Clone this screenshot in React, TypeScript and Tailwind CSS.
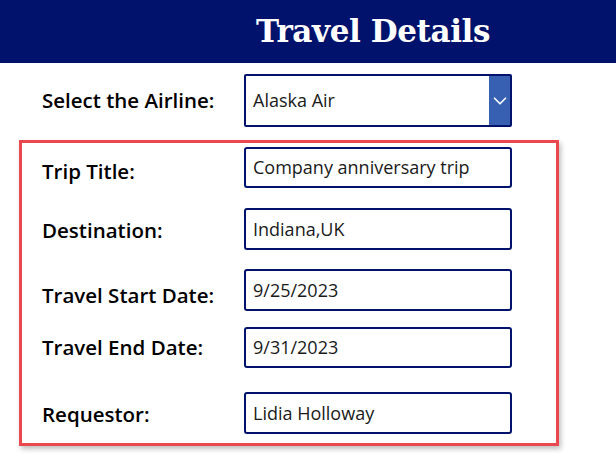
import { ChevronDown } from "lucide-react";

const fields = [
  { label: "Trip Title:", value: "Company anniversary trip", h: "h-[41px]", mt: "mt-0", lab: "pt-[8px]" },
  { label: "Destination:", value: "Indiana,UK", h: "h-[42px]", mt: "mt-[20px]", lab: "pt-[3px]" },
  { label: "Travel Start Date:", value: "9/25/2023", h: "h-[42px]", mt: "mt-[19px]", lab: "pt-[10px]" },
  { label: "Travel End Date:", value: "9/31/2023", h: "h-[41px]", mt: "mt-[16px]", lab: "pt-0" },
  { label: "Requestor:", value: "Lidia Holloway", h: "h-[42px]", mt: "mt-[24px]", lab: "pt-[3px]" },
];

const App = () => {
  return (
    <div className="w-[616px] h-[457px] bg-white overflow-hidden font-['Open_Sans',sans-serif]">
      {/* header */}
      <header className="h-[63px] bg-[#00126b] flex items-center pl-[256px]">
        <h1 className="text-white font-bold text-[31px] font-['DejaVu_Serif',serif] tracking-[-0.4px]">
          Travel Details
        </h1>
      </header>

      {/* airline dropdown */}
      <div className="flex items-center pl-[42px] mt-[11px]">
        <label className="w-[202px] text-[20.5px] font-semibold text-black">Select the Airline:</label>
        <div className="w-[268px] h-[53px] border-2 border-[#00126b] rounded-[2px] flex">
          <span className="flex-1 flex items-center pl-[7px] text-[18px] text-[#1a1a1a]">Alaska Air</span>
          <span className="w-[21px] bg-[#3860b2] flex items-center justify-center">
            <ChevronDown size={22} strokeWidth={1.8} className="text-white shrink-0" />
          </span>
        </div>
      </div>

      {/* trip fields */}
      <div className="ml-[19px] mt-[13px] w-[540px] border-[3px] border-[#e8484e] pl-[20px] pt-[4px] pb-[9px] shadow-[2px_3px_5px_rgba(0,0,0,0.25)]">
        {fields.map((f) => (
          <div key={f.label} className={`flex items-center ${f.mt}`}>
            <label className={`w-[202px] text-[20.5px] font-semibold text-black ${f.lab}`}>{f.label}</label>
            <div className={`w-[268px] ${f.h} border-2 border-[#00126b] rounded-[3px] flex items-center pl-[7px] text-[18px] text-[#1a1a1a]`}>
              {f.value}
            </div>
          </div>
        ))}
      </div>
    </div>
  );
};

export default App;
